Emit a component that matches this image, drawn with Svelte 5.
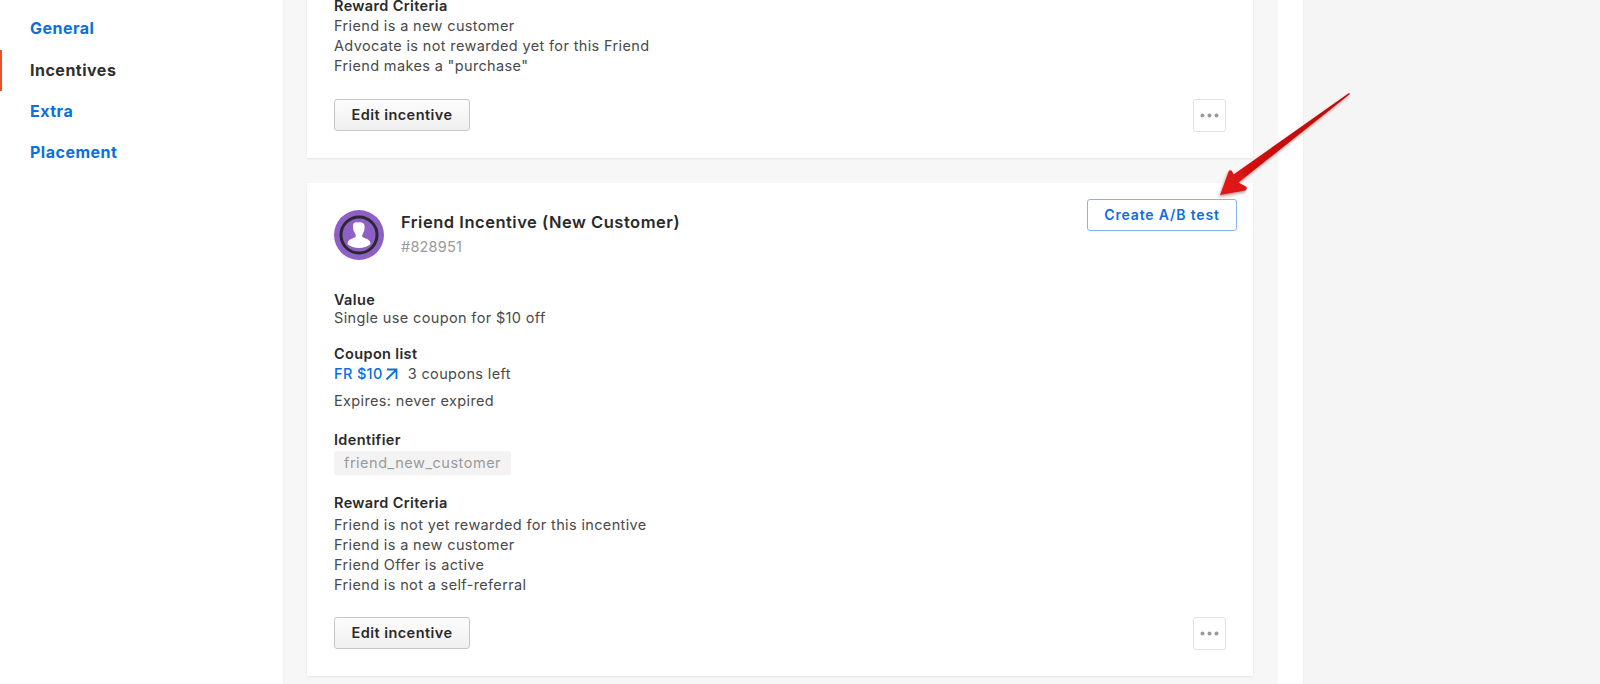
<script>
  const navItems = [
    { label: 'General' },
    { label: 'Incentives', active: true },
    { label: 'Extra' },
    { label: 'Placement' }
  ];
  const topCriteria = ['Friend is a new customer', 'Advocate is not rewarded yet for this Friend', 'Friend makes a "purchase"'];
  const criteria = ['Friend is not yet rewarded for this incentive', 'Friend is a new customer', 'Friend Offer is active', 'Friend is not a self-referral'];
</script>

{#snippet actions()}
  <div class="actions">
    <button class="edit-btn">Edit incentive</button>
    <button class="more-btn" aria-label="More">
      <svg width="19" height="5" viewBox="0 0 19 5"><circle cx="2.5" cy="2.5" r="2" /><circle cx="9.5" cy="2.5" r="2" /><circle cx="16.5" cy="2.5" r="2" /></svg>
    </button>
  </div>
{/snippet}

<div class="page">
  <nav class="sidebar">
    {#each navItems as item}
      <a class="nav-item" class:active={item.active} href="#top">{item.label}</a>
    {/each}
  </nav>

  <main class="panel">
    <section class="card first">
      <h4>Reward Criteria</h4>
      {#each topCriteria as line}
        <p>{line}</p>
      {/each}
      {@render actions()}
    </section>

    <section class="card second">
      <header class="card-head">
        <svg class="avatar" width="50" height="50" viewBox="0 0 50 50">
          <circle cx="25" cy="25" r="25" fill="#8e60c6" />
          <circle cx="25" cy="25" r="18" fill="#8e60c6" stroke="#2b2830" stroke-width="3" />
          <path d="M19 15c.5-3 3.500-3 5-2.500 2-.8 6-.5 6.500 3 .4 2.500-.3 6-1.500 8-.8 1.300-1.200 2.500-.4 3.400 1.500 1.300 5.600 1.600 7.200 4.300.5 1 .7 2 .7 2.800-2.800 2.500-7 4-11.500 4s-8.700-1.500-11.500-4c0-.8.200-1.800.7-2.800 1.600-2.700 5.700-3 7.200-4.300.8-.9.400-2.100-.4-3.400-1.300-2-2.400-5.500-2-8.500z" fill="#fff" />
        </svg>
        <div class="head-text">
          <h3>Friend Incentive (New Customer)</h3>
          <span class="id">#828951</span>
        </div>
        <button class="ab-btn">Create A/B test</button>
      </header>

      <div class="field value">
        <h4>Value</h4>
        <p>Single use coupon for $10 off</p>
      </div>

      <div class="field coupon">
        <h4>Coupon list</h4>
        <p class="coupon-row">
          <a href="#top">FR $10<svg width="13" height="13" viewBox="0 0 13 13" fill="none" stroke="#0b6fdd" stroke-width="1.800"><path d="M2 1.500h9.500V11M11.500 1.500 1.500 11.500" /></svg></a>
          <span>3 coupons left</span>
        </p>
        <p class="expires">Expires: never expired</p>
      </div>

      <div class="field identifier">
        <h4>Identifier</h4>
        <span class="pill">friend_new_customer</span>
      </div>

      <div class="field criteria">
        <h4>Reward Criteria</h4>
        <div class="criteria-lines">
          {#each criteria as line}
            <p>{line}</p>
          {/each}
        </div>
      </div>

      {@render actions()}
    </section>
  </main>

  <div class="gutter"></div>
  <div class="outer"></div>

  <svg class="arrow" width="150" height="120" viewBox="1210 85 150 120">
    <defs>
      <linearGradient id="shaft" x1="1349" y1="94" x2="1225" y2="190" gradientUnits="userSpaceOnUse">
        <stop offset="0" stop-color="#b80b0b" />
        <stop offset="0.7" stop-color="#cc0e0f" />
        <stop offset="1" stop-color="#e31616" />
      </linearGradient>
      <filter id="arrow-shadow" x="-20%" y="-20%" width="140%" height="140%">
        <feDropShadow dx="-1" dy="2" stdDeviation="1.500" flood-color="#5a0000" flood-opacity="0.4" />
      </filter>
    </defs>
    <path d="M1350 94 1349 93 1233.500 174.500Q1232 169 1229 170.500L1220 195 1245.500 190.500Q1248.500 187.500 1245 186L1238.500 182.500Z" fill="url(#shaft)" filter="url(#arrow-shadow)" />
  </svg>
</div>

<style>
  :global(body) {
    margin: 0;
    background: #f5f5f5;
  }

  .page {
    position: relative;
    display: flex;
    width: 1600px;
    height: 684px;
    overflow: hidden;
    font-family: Inter, "Liberation Sans", sans-serif;
    font-size: 14.5px;
    letter-spacing: 0.36px;
    line-height: 20px;
    color: #4a4a4a;
  }

  .sidebar {
    width: 283px;
    flex: none;
    padding-top: 8px;
    background: #fff;
    box-sizing: border-box;
  }

  .nav-item {
    display: block;
    height: 41.5px;
    line-height: 41.5px;
    padding-left: 28px;
    border-left: 2px solid transparent;
    font-size: 16px;
    letter-spacing: 0.5px;
    font-weight: 700;
    color: #0b6fdd;
    text-decoration: none;
  }

  .nav-item:last-child {
    margin-top: -1px;
  }

  .nav-item.active {
    border-left-color: #f04e23;
    color: #2f2f2f;
  }

  .panel {
    width: 995px;
    flex: none;
    box-sizing: border-box;
    padding: 0 25px 0 24px;
    background: #f7f7f7;
    box-shadow: inset 2px 0 2px -1px #f0f0f0;
  }

  .gutter {
    width: 25px;
    flex: none;
    background: #fff;
  }

  .outer {
    flex: 1;
    background: #f5f5f5;
    box-shadow: inset 1px 0 1px #eee;
  }

  .card {
    background: #fff;
    box-shadow: 0 1px 2px rgba(0, 0, 0, 0.08);
    padding: 0 27px;
  }

  .card.first {
    height: 162px;
    margin-top: -4px;
    margin-bottom: 25px;
  }

  .card.second {
    height: 493px;
    overflow: hidden;
  }

  h3, h4, p {
    margin: 0;
  }

  h3 {
    font-size: 16.5px;
    line-height: 20px;
    letter-spacing: 0.52px;
    font-weight: 600;
    color: #2a2a2a;
  }

  h4 {
    font-size: 14.5px;
    line-height: 20px;
    letter-spacing: 0.36px;
    font-weight: 600;
    color: #2a2a2a;
  }

  .actions {
    display: flex;
    justify-content: space-between;
    align-items: flex-start;
    margin-top: 23px;
  }

  .edit-btn {
    width: 136px;
    height: 32px;
    padding: 0;
    border: 1px solid #c6c6c6;
    border-radius: 3px;
    background: linear-gradient(#fdfdfd, #efefef);
    font: 600 14.5px/1 Inter, "Liberation Sans", sans-serif;
    letter-spacing: 0.45px;
    color: #2a2a2a;
  }

  .more-btn {
    display: flex;
    align-items: center;
    justify-content: center;
    width: 33px;
    height: 33px;
    padding: 0;
    border: 1.5px solid #e3e3e3;
    border-radius: 3px;
    background: #fff;
  }

  .more-btn circle {
    fill: #999;
  }

  .card-head {
    display: flex;
    align-items: flex-start;
    height: 90px;
    position: relative;
    padding-top: 27px;
    box-sizing: border-box;
  }

  .avatar {
    flex: none;
    margin-right: 17px;
  }

  .head-text {
    flex: 1;
    padding-top: 2px;
  }

  .id {
    display: block;
    margin-top: 5px;
    color: #9a9a9a;
    font-size: 14.5px;
    letter-spacing: 0.2px;
  }

  .ab-btn {
    position: absolute;
    top: 16px;
    right: -11px;
    width: 150px;
    height: 32px;
    padding: 0;
    border: 1px solid #84b4ec;
    border-radius: 3px;
    background: #fff;
    font: 600 14px/1 Inter, "Liberation Sans", sans-serif;
    letter-spacing: 0.85px;
    color: #0b6fdd;
  }

  .field.value {
    margin-top: 17px;
  }

  .field.value p {
    margin-top: -2px;
  }

  .field.coupon {
    margin-top: 16px;
  }

  .coupon-row {
    display: flex;
    gap: 10px;
    margin-top: 0;
  }

  .coupon-row a {
    display: flex;
    align-items: center;
    gap: 2px;
    color: #0b6fdd;
    text-decoration: none;
    font-weight: 500;
  }

  .expires {
    margin-top: 7px;
  }

  .field.identifier {
    margin-top: 19px;
  }

  .pill {
    display: inline-block;
    margin-top: 1px;
    padding: 2px 10px;
    border-radius: 2px;
    background: #f3f3f3;
    color: #9a9a9a;
    letter-spacing: 0.52px;
  }

  .field.criteria {
    margin-top: 18px;
  }

  .criteria-lines {
    margin-top: 2px;
  }

  .second .actions {
    margin-top: 22px;
  }

  .arrow {
    position: absolute;
    left: 1210px;
    top: 85px;
  }
</style>
